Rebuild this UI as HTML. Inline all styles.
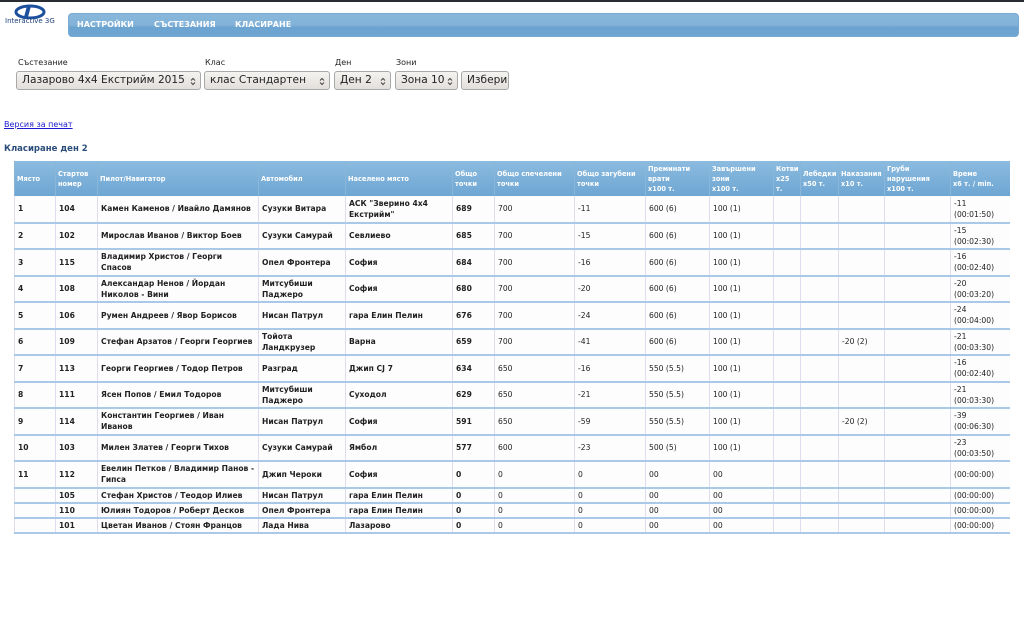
<!DOCTYPE html>
<html><head><meta charset="utf-8"><style>
*{margin:0;padding:0;box-sizing:border-box}
body{width:1024px;height:640px;background:#fff;font-family:"DejaVu Sans","Liberation Sans",sans-serif;position:relative;overflow:hidden}
.topline{position:absolute;left:0;top:0;width:1024px;height:2px;background:#2a2e33}
.nav{position:absolute;left:68px;top:13px;width:951px;height:24px;border-radius:4px;background:linear-gradient(#8ab8dc 0%,#82b2d9 50%,#6ca3d0 60%,#6ea5d2 100%);border:1px solid #7aaad2}
.nav span{position:absolute;top:6px;color:#fff;font-weight:bold;font-size:8px}
.lbl{position:absolute;top:58px;font-size:8px;color:#222}
.sel{position:absolute;top:71px;height:19px;border:1px solid #a9a9a9;border-radius:3px;background:linear-gradient(#f4f3f1,#e2dfdb);font-size:10.6px;color:#222;padding:2px 0 0 5px;white-space:nowrap;overflow:hidden}
.sel svg{position:absolute;right:4px;top:5px}
a.pr{position:absolute;left:4px;top:120px;font-size:8px;color:#1a1acc;text-decoration:underline}
h3{position:absolute;left:4px;top:144px;font-size:8.5px;color:#2a4d7a;font-weight:bold}
table{position:absolute;left:14px;top:161px;width:995px;border-collapse:collapse;table-layout:fixed;font-size:7.6px;color:#222}
th{background:linear-gradient(#8cbbdf,#6ea6d3);color:#fff;font-weight:bold;text-align:left;vertical-align:middle;padding:0 2px;height:35px;font-size:6.6px;border-left:1px solid #8ab6da;line-height:10px}
td{padding:0 3px;border-bottom:2px solid #a9c9e6;border-left:1px solid #dde;height:26.5px;line-height:11px;background:#fdfdfd}
td.s{height:15px}
td.b{font-weight:bold}
</style></head><body>
<div class="topline"></div>
<svg style="position:absolute;left:12px;top:3px" width="36" height="16" viewBox="0 0 36 16"><ellipse cx="18" cy="9" rx="14" ry="6" fill="none" stroke="#1c4f9c" stroke-width="3"/><path d="M15 3 L19 3 L16 14 L12 14 Z" fill="#1c4f9c"/></svg>
<div style="position:absolute;left:5px;top:17px;font-size:7px;color:#1c3f7a">Interactive 3G</div>
<div class="nav"><span style="left:8px">НАСТРОЙКИ</span><span style="left:85px">СЪСТЕЗАНИЯ</span><span style="left:166px">КЛАСИРАНЕ</span></div>
<div class="lbl" style="left:18px">Състезание</div>
<div class="lbl" style="left:205px">Клас</div>
<div class="lbl" style="left:335px">Ден</div>
<div class="lbl" style="left:396px">Зони</div>
<div class="sel" style="left:16px;width:185px">Лазарово 4x4 Екстрийм 2015<svg width="6" height="9" viewBox="0 0 6 9"><path d="M1 3.5L3 1.5L5 3.5M1 5.5L3 7.5L5 5.5" fill="none" stroke="#444"/></svg></div>
<div class="sel" style="left:204px;width:126px">клас Стандартен<svg width="6" height="9" viewBox="0 0 6 9"><path d="M1 3.5L3 1.5L5 3.5M1 5.5L3 7.5L5 5.5" fill="none" stroke="#444"/></svg></div>
<div class="sel" style="left:334px;width:57px">Ден 2<svg width="6" height="9" viewBox="0 0 6 9"><path d="M1 3.5L3 1.5L5 3.5M1 5.5L3 7.5L5 5.5" fill="none" stroke="#444"/></svg></div>
<div class="sel" style="left:395px;width:63px">Зона 10<svg width="6" height="9" viewBox="0 0 6 9"><path d="M1 3.5L3 1.5L5 3.5M1 5.5L3 7.5L5 5.5" fill="none" stroke="#444"/></svg></div>
<div class="sel" style="left:461px;width:48px">Избери</div>
<a class="pr">Версия за печат</a>
<h3>Класиране ден 2</h3>
<table>
<colgroup><col style="width:41px"><col style="width:42px"><col style="width:161px"><col style="width:87px"><col style="width:107px"><col style="width:42px"><col style="width:80px"><col style="width:71px"><col style="width:64px"><col style="width:64px"><col style="width:27px"><col style="width:38px"><col style="width:46px"><col style="width:66px"><col style="width:59px"></colgroup>
<tr><th>Място</th><th>Стартов номер</th><th>Пилот/Навигатор</th><th>Автомобил</th><th>Населено място</th><th>Общо точки</th><th>Общо спечелени точки</th><th>Общо загубени точки</th><th>Преминати врати<br>x100 т.</th><th>Завършени зони<br>x100 т.</th><th>Котви x25 т.</th><th>Лебедки x50 т.</th><th>Наказания x10 т.</th><th>Груби нарушения x100 т.</th><th>Време<br>x6 т. / min.</th></tr>
<tr><td class="b">1</td><td class="b">104</td><td class="b">Камен Каменов / Ивайло Дамянов</td><td class="b">Сузуки Витара</td><td class="b">АСК "Зверино 4x4 Екстрийм"</td><td class="b">689</td><td>700</td><td>-11</td><td>600 (6)</td><td>100 (1)</td><td></td><td></td><td></td><td></td><td>-11<br>(00:01:50)</td></tr>
<tr><td class="b">2</td><td class="b">102</td><td class="b">Мирослав Иванов / Виктор Боев</td><td class="b">Сузуки Самурай</td><td class="b">Севлиево</td><td class="b">685</td><td>700</td><td>-15</td><td>600 (6)</td><td>100 (1)</td><td></td><td></td><td></td><td></td><td>-15<br>(00:02:30)</td></tr>
<tr><td class="b">3</td><td class="b">115</td><td class="b">Владимир Христов / Георги Спасов</td><td class="b">Опел Фронтера</td><td class="b">София</td><td class="b">684</td><td>700</td><td>-16</td><td>600 (6)</td><td>100 (1)</td><td></td><td></td><td></td><td></td><td>-16<br>(00:02:40)</td></tr>
<tr><td class="b">4</td><td class="b">108</td><td class="b">Александар Ненов / Йордан Николов - Вини</td><td class="b">Митсубиши Паджеро</td><td class="b">София</td><td class="b">680</td><td>700</td><td>-20</td><td>600 (6)</td><td>100 (1)</td><td></td><td></td><td></td><td></td><td>-20<br>(00:03:20)</td></tr>
<tr><td class="b">5</td><td class="b">106</td><td class="b">Румен Андреев / Явор Борисов</td><td class="b">Нисан Патрул</td><td class="b">гара Елин Пелин</td><td class="b">676</td><td>700</td><td>-24</td><td>600 (6)</td><td>100 (1)</td><td></td><td></td><td></td><td></td><td>-24<br>(00:04:00)</td></tr>
<tr><td class="b">6</td><td class="b">109</td><td class="b">Стефан Арзатов / Георги Георгиев</td><td class="b">Тойота Ландкрузер</td><td class="b">Варна</td><td class="b">659</td><td>700</td><td>-41</td><td>600 (6)</td><td>100 (1)</td><td></td><td></td><td>-20 (2)</td><td></td><td>-21<br>(00:03:30)</td></tr>
<tr><td class="b">7</td><td class="b">113</td><td class="b">Георги Георгиев / Тодор Петров</td><td class="b">Разград</td><td class="b">Джип CJ 7</td><td class="b">634</td><td>650</td><td>-16</td><td>550 (5.5)</td><td>100 (1)</td><td></td><td></td><td></td><td></td><td>-16<br>(00:02:40)</td></tr>
<tr><td class="b">8</td><td class="b">111</td><td class="b">Ясен Попов / Емил Тодоров</td><td class="b">Митсубиши Паджеро</td><td class="b">Суходол</td><td class="b">629</td><td>650</td><td>-21</td><td>550 (5.5)</td><td>100 (1)</td><td></td><td></td><td></td><td></td><td>-21<br>(00:03:30)</td></tr>
<tr><td class="b">9</td><td class="b">114</td><td class="b">Константин Георгиев / Иван Иванов</td><td class="b">Нисан Патрул</td><td class="b">София</td><td class="b">591</td><td>650</td><td>-59</td><td>550 (5.5)</td><td>100 (1)</td><td></td><td></td><td>-20 (2)</td><td></td><td>-39<br>(00:06:30)</td></tr>
<tr><td class="b">10</td><td class="b">103</td><td class="b">Милен Златев / Георги Тихов</td><td class="b">Сузуки Самурай</td><td class="b">Ямбол</td><td class="b">577</td><td>600</td><td>-23</td><td>500 (5)</td><td>100 (1)</td><td></td><td></td><td></td><td></td><td>-23<br>(00:03:50)</td></tr>
<tr><td class="b">11</td><td class="b">112</td><td class="b">Евелин Петков / Владимир Панов - Гипса</td><td class="b">Джип Чероки</td><td class="b">София</td><td class="b">0</td><td>0</td><td>0</td><td>00</td><td>00</td><td></td><td></td><td></td><td></td><td>(00:00:00)</td></tr>
<tr><td class="s"></td><td class="b s">105</td><td class="b s">Стефан Христов / Теодор Илиев</td><td class="b s">Нисан Патрул</td><td class="b s">гара Елин Пелин</td><td class="b s">0</td><td class="s">0</td><td class="s">0</td><td class="s">00</td><td class="s">00</td><td class="s"></td><td class="s"></td><td class="s"></td><td class="s"></td><td class="s">(00:00:00)</td></tr>
<tr><td class="s"></td><td class="b s">110</td><td class="b s">Юлиян Тодоров / Роберт Десков</td><td class="b s">Опел Фронтера</td><td class="b s">гара Елин Пелин</td><td class="b s">0</td><td class="s">0</td><td class="s">0</td><td class="s">00</td><td class="s">00</td><td class="s"></td><td class="s"></td><td class="s"></td><td class="s"></td><td class="s">(00:00:00)</td></tr>
<tr><td class="s"></td><td class="b s">101</td><td class="b s">Цветан Иванов / Стоян Францов</td><td class="b s">Лада Нива</td><td class="b s">Лазарово</td><td class="b s">0</td><td class="s">0</td><td class="s">0</td><td class="s">00</td><td class="s">00</td><td class="s"></td><td class="s"></td><td class="s"></td><td class="s"></td><td class="s">(00:00:00)</td></tr>
</table>
</body></html>
